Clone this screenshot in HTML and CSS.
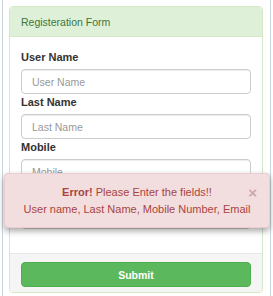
FILE: index.html
```html
<!DOCTYPE html>
<html>
<head>
<meta charset="utf-8">
<link rel="stylesheet" href="styles.css">
</head>
<body>
<div class="frame">
  <div class="panel">
    <div class="panel-heading">Registeration Form</div>
    <div class="panel-body">
      <div class="group">
        <label class="label">User Name</label>
        <input class="input" type="text" placeholder="User Name">
      </div>
      <div class="group">
        <label class="label">Last Name</label>
        <input class="input" type="text" placeholder="Last Name">
      </div>
      <div class="group">
        <label class="label">Mobile</label>
        <input class="input" type="text" placeholder="Mobile">
      </div>
      <div class="group">
        <label class="label">Email</label>
        <input class="input" type="text" placeholder="Email">
      </div>
    </div>
    <div class="panel-footer">
      <button class="btn">Submit</button>
    </div>
  </div>
  <div class="alert">
    <span class="close">×</span>
    <div class="line"><strong>Error!</strong> Please Enter the fields!!</div>
    <div class="line">User name, Last Name, Mobile Number, Email</div>
  </div>
</div>
</body>
</html>
```
FILE: styles.css
```css
html, body {
  margin: 0;
  padding: 0;
  background: #ffffff;
  overflow: hidden;
  width: 273px;
}
body {
  font-family: "Liberation Sans", Arial, sans-serif;
  font-size: 10.5px;
  color: #333;
}
.frame {
  position: relative;
  margin: 0 0 0 2px;
  width: 269px;
  height: 296px;
  border-left: 1px solid #c9d6db;
  border-right: 1px solid #c9d6db;
  padding: 6px 0 0 6px;
  box-sizing: border-box;
}
.panel {
  width: 254px;
  box-sizing: border-box;
  border: 1px solid #d6e9c6;
  border-radius: 4px;
  background: #fff;
  overflow: hidden;
}
.panel-heading {
  background: #dff0d8;
  color: #3c763d;
  height: 29px;
  line-height: 31px;
  padding: 0 11px;
  font-size: 10.5px;
  border-bottom: 1px solid #d6e9c6;
}
.panel-body {
  padding: 12px 11px 24px 11px;
}
.group {
  display: flex;
  flex-direction: column;
}
.label {
  font-weight: bold;
  font-size: 11px;
  line-height: 16px;
  color: #333;
  margin-bottom: 4px;
}
.input {
  display: block;
  height: 25px;
  box-sizing: border-box;
  border: 1px solid #ccc;
  border-radius: 4px;
  padding: 0 10px;
  font-family: "Liberation Sans", Arial, sans-serif;
  font-size: 10.5px;
  box-shadow: inset 0 1px 1px rgba(0,0,0,0.075);
  margin: 0;
  width: 100%;
}
.input::placeholder {
  color: #999;
}
.panel-footer {
  background: #f5f5f5;
  border-top: 1px solid #e8e8e8;
  padding: 8px 11px 5px 11px;
}
.btn {
  display: block;
  width: 100%;
  height: 25px;
  background: #5cb85c;
  border: 1px solid #4cae4c;
  border-radius: 4px;
  color: #fff;
  font-family: "Liberation Sans", Arial, sans-serif;
  font-weight: bold;
  font-size: 10.5px;
  padding: 0;
}
.alert {
  position: absolute;
  left: 1px;
  top: 173px;
  width: 266px;
  height: 55px;
  box-sizing: border-box;
  background: #f2dede;
  border: 1px solid #ebccd1;
  border-radius: 4px;
  color: #a94442;
  box-shadow: 0 3px 6px rgba(0,0,0,0.35);
  text-align: center;
  font-size: 11px;
  line-height: 17px;
  padding-top: 10px;
}
.alert strong {
  font-weight: bold;
}
.close {
  position: absolute;
  right: 12px;
  top: 10px;
  font-size: 15px;
  line-height: 17px;
  color: #c9a9a9;
  font-weight: bold;
}
```
